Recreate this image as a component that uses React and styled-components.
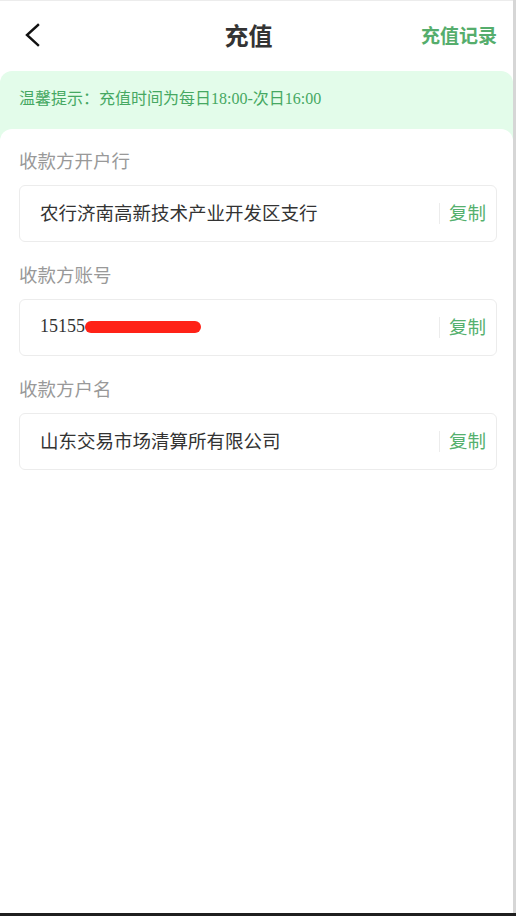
import React from 'react'
import styled, { createGlobalStyle } from 'styled-components';

const GlobalStyle = createGlobalStyle`
    html, body {
        margin: 0;
        padding: 0;
        background: #fff;
    }
    body {
        font-family: "Noto Sans CJK SC", "Liberation Sans", sans-serif;
    }
`

const Frame = styled.div`
    height: 100vh;
    display: flex;
    flex-direction: column;
`

const Body = styled.div`
    flex: 1;
    display: flex;
    min-height: 0;
`

const Page = styled.div`
    flex: 1;
    display: flex;
    flex-direction: column;
    border-top: 1px solid #ececec;
    background: #fff;
`

const ScrollStrip = styled.div`
    width: 3px;
    background: #d6d6d6;
`

const BottomBar = styled.div`
    height: 3px;
    background: #1f1f1f;
`

const Header = styled.div`
    height: 70px;
    display: flex;
    align-items: center;
    justify-content: space-between;
    padding: 0 16px 3px 24px;
    box-sizing: border-box;
    position: relative;
`

const BackBtn = styled.div`
    width: 20px;
    height: 26px;
    display: flex;
    align-items: center;
`

const Title = styled.h1`
    position: absolute;
    left: 0;
    right: 16px;
    margin: 0;
    text-align: center;
    font-size: 24px;
    font-weight: bold;
    color: #333;
    pointer-events: none;
`

const HeaderLink = styled.span`
    font-size: 19px;
    font-weight: bold;
    color: #55ad6c;
`

const Notice = styled.div`
    background: #e3fcea;
    border-radius: 12px 12px 0 0;
    padding: 16px 19px 30px;
    font-family: "Liberation Serif", "Noto Sans CJK SC", serif;
    font-size: 16px;
    line-height: 24px;
    color: #46a862;
`

const Content = styled.div`
    flex: 1;
    background: #fff;
    border-radius: 12px 12px 0 0;
    margin-top: -12px;
    padding: 19px 16px 0 19px;
`

const Group = styled.div`
    margin-bottom: 20px;
`

const Label = styled.div`
    font-size: 18.5px;
    line-height: 24px;
    color: #999;
    margin-bottom: 13px;
`

const Field = styled.div`
    border: 1px solid #ececec;
    border-radius: 6px;
    display: flex;
    align-items: center;
    padding: 0 10px 3px 20px;
    box-sizing: border-box;
    height: 57px;
`

const Value = styled.div`
    flex: 1;
    font-size: ${p => p.serif ? '18px' : '18.5px'};
    color: #333;
    font-family: ${p => p.serif ? '"Liberation Serif", serif' : '"Noto Sans CJK SC", sans-serif'};
    display: flex;
    align-items: center;
`

const Redact = styled.span`
    display: inline-block;
    width: 116px;
    height: 12px;
    border-radius: 6px;
    background: #ff2217;
    margin-top: 1px;
`

const Divider = styled.span`
    width: 1px;
    height: 21px;
    background: #ececec;
    margin: 3px 9px 0 0;
`

const CopyBtn = styled.span`
    font-size: 18.5px;
    color: #55b06e;
`

const items = [
    { label: '收款方开户行', value: '农行济南高新技术产业开发区支行' },
    { label: '收款方账号', value: '15155', redacted: true },
    { label: '收款方户名', value: '山东交易市场清算所有限公司' },
];

function App() {
    return (
        <Frame>
            <GlobalStyle />
            <Body>
                <Page>
                    <Header>
                        <BackBtn>
                            <svg width="16" height="24" viewBox="0 0 16 24">
                                <path d="M14 2 L3 12 L14 22" fill="none" stroke="#111" strokeWidth="2.4" strokeLinecap="square" />
                            </svg>
                        </BackBtn>
                        <Title>充值</Title>
                        <HeaderLink>充值记录</HeaderLink>
                    </Header>
                    <Notice>温馨提示：充值时间为每日18:00-次日16:00</Notice>
                    <Content>
                        {items.map(item => (
                            <Group key={item.label}>
                                <Label>{item.label}</Label>
                                <Field>
                                    <Value serif={item.redacted}>
                                        {item.value}
                                        {item.redacted && <Redact />}
                                    </Value>
                                    <Divider />
                                    <CopyBtn>复制</CopyBtn>
                                </Field>
                            </Group>
                        ))}
                    </Content>
                </Page>
                <ScrollStrip />
            </Body>
            <BottomBar />
        </Frame>
    );
}

export default App;
